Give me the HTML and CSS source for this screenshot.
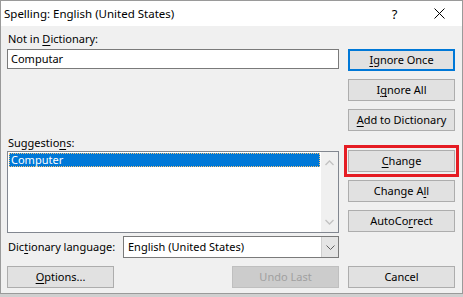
FILE: index.html
```html
<!DOCTYPE html>
<html>
<head>
<meta charset="utf-8">
<link rel="stylesheet" href="styles.css">
</head>
<body>
<div class="dialog">
  <div class="titlebar">
    <span class="title">Spelling: English (United States)</span>
    <span class="help">?</span>
    <span class="close"><svg width="11" height="11" viewBox="0 0 11 11"><path d="M0.5 0.5 L10.5 10.5 M10.5 0.5 L0.5 10.5" stroke="#000" stroke-width="1" fill="none"/></svg></span>
  </div>
  <div class="body">
    <div class="main">
      <div class="left">
        <div class="lbl lbl-nid">Not in <u>D</u>ictionary:</div>
        <div class="textbox">Computar</div>
        <div class="lbl lbl-sug">Suggestio<u>n</u>s:</div>
        <div class="listbox">
          <div class="items"><div class="item sel">Computer</div></div>
          <div class="vscroll">
            <svg width="9" height="6" viewBox="0 0 9 6"><path d="M0.5 5 L4.5 1 L8.5 5" stroke="#c2c2c2" stroke-width="1.3" fill="none"/></svg>
            <svg width="9" height="6" viewBox="0 0 9 6"><path d="M0.5 1 L4.5 5 L8.5 1" stroke="#c2c2c2" stroke-width="1.3" fill="none"/></svg>
          </div>
        </div>
        <div class="langrow">
          <span class="lbl lbl-lang">Dic<u>t</u>ionary language:</span>
          <div class="combo">
            <span class="combo-text">English (United States)</span>
            <span class="drop"><svg width="9" height="5" viewBox="0 0 9 5"><path d="M0.5 0.5 L4.5 4.5 L8.5 0.5" stroke="#606060" stroke-width="1" fill="none"/></svg></span>
          </div>
        </div>
      </div>
      <div class="right">
        <div class="btn default"><u>I</u>gnore Once</div>
        <div class="btn">I<u>g</u>nore All</div>
        <div class="btn"><u>A</u>dd to Dictionary</div>
        <div class="btn change"><u>C</u>hange<span class="hl"></span></div>
        <div class="btn">Change A<u>l</u>l</div>
        <div class="btn">AutoCo<u>r</u>rect</div>
      </div>
    </div>
    <div class="bottom">
      <div class="bottom-left">
        <div class="btn"><u>O</u>ptions...</div>
        <div class="btn disabled">Undo Last</div>
      </div>
      <div class="btn">Cancel</div>
    </div>
  </div>
</div>
</body>
</html>
```
FILE: styles.css
```css
html, body {
  margin: 0;
  padding: 0;
}
body {
  background: #cfcfcf;
  font-family: "Noto Sans", "DejaVu Sans", sans-serif;
  font-size: 11px;
  color: #000;
  width: 463px;
  height: 297px;
  overflow: hidden;
}
u {
  text-decoration: underline;
  text-decoration-thickness: 1px;
  text-underline-offset: 2px;
}
.dialog {
  width: 461px;
  border: 1px solid #9a9a9a;
  background: #f0f0f0;
}
.titlebar {
  height: 25px;
  background: #fff;
  display: flex;
  align-items: center;
}
.title {
  flex: 1;
  padding-left: 3px;
  font-size: 11.5px;
  line-height: 16px;
}
.help {
  width: 45px;
  text-align: center;
  font-size: 13px;
  line-height: 16px;
}
.close {
  width: 45px;
  display: flex;
  justify-content: center;
  align-items: center;
}
.body {
  padding: 0 6px 5px 6px;
}
.main {
  display: grid;
  grid-template-columns: 332px 107px;
  column-gap: 9px;
}
.left {
  display: flex;
  flex-direction: column;
}
.lbl {
  height: 16px;
  line-height: 16px;
  padding-left: 1px;
}
.lbl-nid {
  margin-top: 5px;
}
.textbox {
  margin-top: 2px;
  height: 20px;
  box-sizing: border-box;
  border: 1px solid #7a7a7a;
  background: #fff;
  padding: 0 3px;
  line-height: 18px;
}
.lbl-sug {
  margin-top: 66px;
}
.listbox {
  height: 82px;
  box-sizing: border-box;
  border: 1px solid #828790;
  background: #fff;
  display: flex;
}
.items {
  flex: 1;
  padding: 1px;
}
.item {
  height: 14px;
  line-height: 14px;
  padding-left: 2px;
}
.sel {
  background: #0078d7;
  color: #fff;
  outline: 1px dotted #f3c27a;
  outline-offset: -1px;
}
.vscroll {
  width: 17px;
  background: #f0f0f0;
  display: flex;
  flex-direction: column;
  justify-content: space-between;
  align-items: center;
  padding: 8px 0 7px 0;
}
.langrow {
  margin-top: 3px;
  height: 22px;
  display: flex;
  align-items: center;
}
.lbl-lang {
  width: 115px;
}
.combo {
  width: 216px;
  height: 22px;
  box-sizing: border-box;
  border: 1px solid #7a7a7a;
  background: #fff;
  display: flex;
  align-items: center;
}
.combo-text {
  flex: 1;
  padding-left: 4px;
  line-height: 16px;
}
.drop {
  width: 16px;
  height: 20px;
  background: #e5e5e5;
  border-left: 1px solid #cfcfcf;
  display: flex;
  align-items: center;
  justify-content: center;
}
.right {
  display: flex;
  flex-direction: column;
  padding-top: 23px;
}
.btn {
  height: 22px;
  box-sizing: border-box;
  border: 1px solid #adadad;
  background: #e1e1e1;
  text-align: center;
  line-height: 20px;
  white-space: nowrap;
}
.right .btn + .btn {
  margin-top: 8px;
}
.right .btn.change {
  margin-top: 19px;
}
.btn.default {
  border: 2px solid #0078d7;
  line-height: 18px;
}
.btn.disabled {
  background: #cccccc;
  border-color: #bfbfbf;
  color: #a0a0a0;
}
.change {
  position: relative;
}
.hl {
  position: absolute;
  left: -5px;
  right: -5px;
  top: -6px;
  bottom: -6px;
  border: 3px solid #e51c23;
}
.bottom {
  margin-top: 8px;
  display: grid;
  grid-template-columns: 332px 107px;
  column-gap: 9px;
}
.bottom-left {
  display: flex;
  justify-content: space-between;
}
.bottom-left .btn {
  width: 107px;
}
```
